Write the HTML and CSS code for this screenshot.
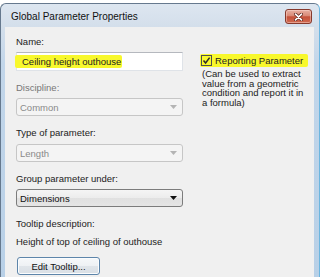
FILE: index.html
```html
<!DOCTYPE html>
<html>
  <head>
    <meta charset="UTF-8">
    <title>Global Parameter Properties</title>
    <link rel="stylesheet" href="styles.css">
  </head>
  <body>
    <div class="window">
      <div class="titlebar">
        <span class="title">Global Parameter Properties</span>
        <button class="close-btn" aria-label="Close">
          <svg width="9" height="8" viewBox="0 0 9 8">
            <path d="M1.5 1.2L7.5 6.8M7.5 1.2L1.5 6.8" stroke="#5b1f17" stroke-width="3.2" stroke-linecap="round"/>
            <path d="M1.5 1.2L7.5 6.8M7.5 1.2L1.5 6.8" stroke="#fff" stroke-width="1.7" stroke-linecap="round"/>
          </svg>
        </button>
      </div>
      <div class="client">
        <div class="left-col">
          <div class="label">Name:</div>
          <div class="textbox"><span class="marker name-mark">Ceiling height outhouse</span></div>

          <div class="label label-disabled">Discipline:</div>
          <div class="combo combo-disabled">
            <span>Common</span>
            <svg class="arrow" width="7" height="4" viewBox="0 0 7 4"><path d="M0 0h7L3.5 4z"/></svg>
          </div>

          <div class="label">Type of parameter:</div>
          <div class="combo combo-disabled combo-type">
            <span>Length</span>
            <svg class="arrow" width="7" height="4" viewBox="0 0 7 4"><path d="M0 0h7L3.5 4z"/></svg>
          </div>

          <div class="label">Group parameter under:</div>
          <div class="combo">
            <span>Dimensions</span>
            <svg class="arrow" width="7" height="4" viewBox="0 0 7 4"><path d="M0 0h7L3.5 4z"/></svg>
          </div>

          <div class="label">Tooltip description:</div>
          <div class="tooltip-text">Height of top of ceiling of outhouse</div>

          <button class="btn">Edit Tooltip...</button>
        </div>

        <div class="right-col">
          <div class="marker check-row">
            <span class="checkbox">
              <svg width="9" height="9" viewBox="0 0 9 9"><path d="M1.5 4.5L3.6 7L7.6 1.6" fill="none" stroke="#2b2b2b" stroke-width="1.5"/></svg>
            </span>
            <span>Reporting Parameter</span>
          </div>
          <p class="note">(Can be used to extract value from a geometric condition and report it in a formula)</p>
        </div>
      </div>
    </div>
  </body>
</html>
```

FILE: styles.css
```css
body {
  margin: 0;
  background-color: #fff;
  font-family: "Liberation Sans", Arial, sans-serif;
  font-size: 9.5px;
  color: #222;
}

.window {
  margin-top: 3px;
  height: 274px;
  box-sizing: border-box;
  display: flex;
  flex-direction: column;
  padding: 0 5px 0 4px;
  border: 1px solid #66798e;
  border-right-color: #6cb6df;
  border-bottom: none;
  border-radius: 6px 6px 0 0;
  background: linear-gradient(to bottom, #dde6f0 0, #d4dfeb 22px, #c2d6ea 60px, #b8d0e7 100%);
}

.titlebar {
  height: 23px;
  display: flex;
  align-items: center;
  justify-content: space-between;
  padding: 2px 2px 0 6px;
  box-sizing: border-box;
}

.title {
  font-size: 10px;
  color: #111;
}

.close-btn {
  width: 27px;
  height: 15px;
  padding: 0;
  display: flex;
  align-items: center;
  justify-content: center;
  border: 1px solid #86392c;
  border-radius: 3px;
  background: linear-gradient(to bottom, #e7b0a3 0, #d98a76 45%, #c5513a 52%, #d06a50 100%);
  box-shadow: inset 0 0 0 1px rgba(255, 225, 215, 0.45);
}

.client {
  flex: 1;
  display: flex;
  padding: 9px 0 0 11px;
  background-color: #f0f0f0;
}

.left-col {
  width: 167px;
  display: flex;
  flex-direction: column;
  align-items: flex-start;
}

.label {
  line-height: 12px;
  margin-top: 11px;
}

.label:first-child {
  margin-top: 0;
}

.label-disabled {
  color: #777;
}

.textbox {
  width: 167px;
  height: 19px;
  margin-top: 4px;
  box-sizing: border-box;
  display: flex;
  align-items: center;
  background-color: #fff;
  border: 1px solid #dfe3e8;
  border-top-color: #b5b8be;
}

.marker {
  background-color: #f8f82c;
  border-radius: 2px;
}

.name-mark {
  margin-left: -2px;
  padding: 0 1px 0 7px;
  line-height: 13px;
}

.combo {
  width: 167px;
  height: 18px;
  margin-top: 4px;
  box-sizing: border-box;
  display: flex;
  align-items: center;
  justify-content: space-between;
  padding: 0 5px 0 3px;
  border: 1px solid #7c7c7c;
  border-radius: 3px;
  background: linear-gradient(to bottom, #f5f5f5 0, #ececec 50%, #e0e0e0 51%, #e5e5e5 100%);
  color: #111;
}

.combo-type {
  margin-top: 5px;
}

.combo-disabled {
  border-color: #c6c6c6;
  background: #f4f4f4;
  color: #8a8a8a;
}

.arrow {
  fill: #111;
}

.combo-disabled .arrow {
  fill: #b4b4b4;
}

.tooltip-text {
  line-height: 12px;
  margin-top: 6px;
}

.btn {
  width: 83px;
  height: 18px;
  margin: 9px 0 0 1px;
  padding: 0;
  font-family: "Liberation Sans", Arial, sans-serif;
  font-size: 9.5px;
  color: #111;
  border: 1px solid #5d85aa;
  border-radius: 3px;
  background: linear-gradient(to bottom, #f6f8fa 0, #eef1f4 50%, #e0e5ea 51%, #d9dfe5 100%);
  box-shadow: inset 0 0 0 1px #fafcfe;
}

.right-col {
  margin-left: 17px;
  padding-top: 18px;
}

.check-row {
  display: flex;
  align-items: center;
  height: 13px;
  padding-right: 2px;
}

.checkbox {
  width: 11px;
  height: 11px;
  box-sizing: border-box;
  margin: 0 3px 0 1px;
  display: flex;
  align-items: center;
  justify-content: center;
  border: 1px solid #4f4f4f;
}

.note {
  width: 106px;
  margin: 2px 0 0 2px;
  line-height: 9.7px;
}
```
